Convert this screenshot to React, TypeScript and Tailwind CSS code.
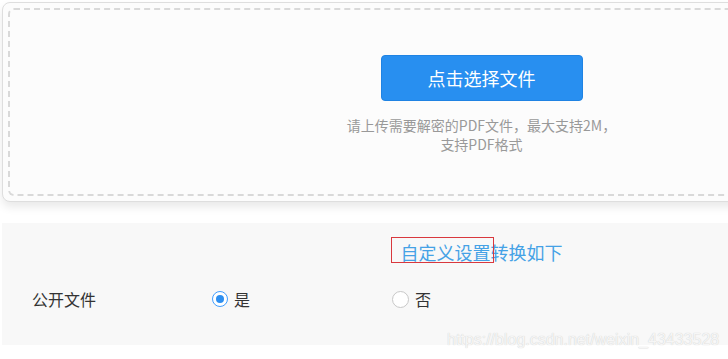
import React from "react";

export default function App() {
  return (
    <div
      className="relative w-[728px] h-[359px] overflow-hidden bg-white"
      style={{ fontFamily: '"Noto Sans CJK SC", "Noto Sans", sans-serif' }}
    >
      <div className="pt-[2px] pl-[2px]">
        <div className="w-[959px] h-[200px] rounded-[8px] border border-[#dedede] bg-[#fcfcfc] p-[5px] shadow-[0_5px_10px_rgba(0,0,0,0.09)]">
          <div className="h-full rounded-[6px] border-2 border-dashed border-[#d9d9d9] flex flex-col items-center pt-[45px]">
            <button className="w-[202px] h-[46px] rounded-[4px] bg-[#288ff0] border border-[#1f83e3] text-white text-[18px] leading-none flex items-center justify-center">
              点击选择文件
            </button>
            <div className="mt-[15px] text-[14px] leading-[19px] text-[#999] text-center">
              <div>请上传需要解密的PDF文件，最大支持2M，</div>
              <div>支持PDF格式</div>
            </div>
          </div>
        </div>
      </div>

      <div className="ml-[2px] mt-[21px] w-[959px] h-[122px] bg-[#f8f8f8]">
        <div className="relative h-[60px] flex items-center justify-center pb-[2px]">
          <span className="text-[18px] leading-none text-[#45a2e6]">自定义设置转换如下</span>
        </div>
        <div className="flex items-center h-[32px] pl-[30px] text-[16px] text-[#333]">
          <div className="w-[180px]">公开文件</div>
          <label className="w-[180px] flex items-center gap-[6px]">
            <span className="w-[16px] h-[16px] rounded-full border-[1.5px] border-[#409eff] bg-white flex items-center justify-center">
              <span className="w-[8px] h-[8px] rounded-full bg-[#2d8ff0]" />
            </span>
            <span>是</span>
          </label>
          <label className="w-[180px] flex items-center gap-[6px]">
            <span className="w-[17px] h-[17px] rounded-full border border-[#c8c8c8] bg-white" />
            <span>否</span>
          </label>
        </div>
      </div>

      <div className="absolute left-[391px] top-[237px] w-[103px] h-[26px] border border-[#d9383e]" />

      <div
        className="absolute left-[447px] top-[330px] text-[16px] leading-[20px] text-[#f6f6f6] [text-shadow:0_0_1px_#c4c4c4] whitespace-nowrap"
        style={{ fontFamily: '"Liberation Sans", Arial, sans-serif' }}
      >
        https://blog.csdn.net/weixin_43433528
      </div>
    </div>
  );
}
